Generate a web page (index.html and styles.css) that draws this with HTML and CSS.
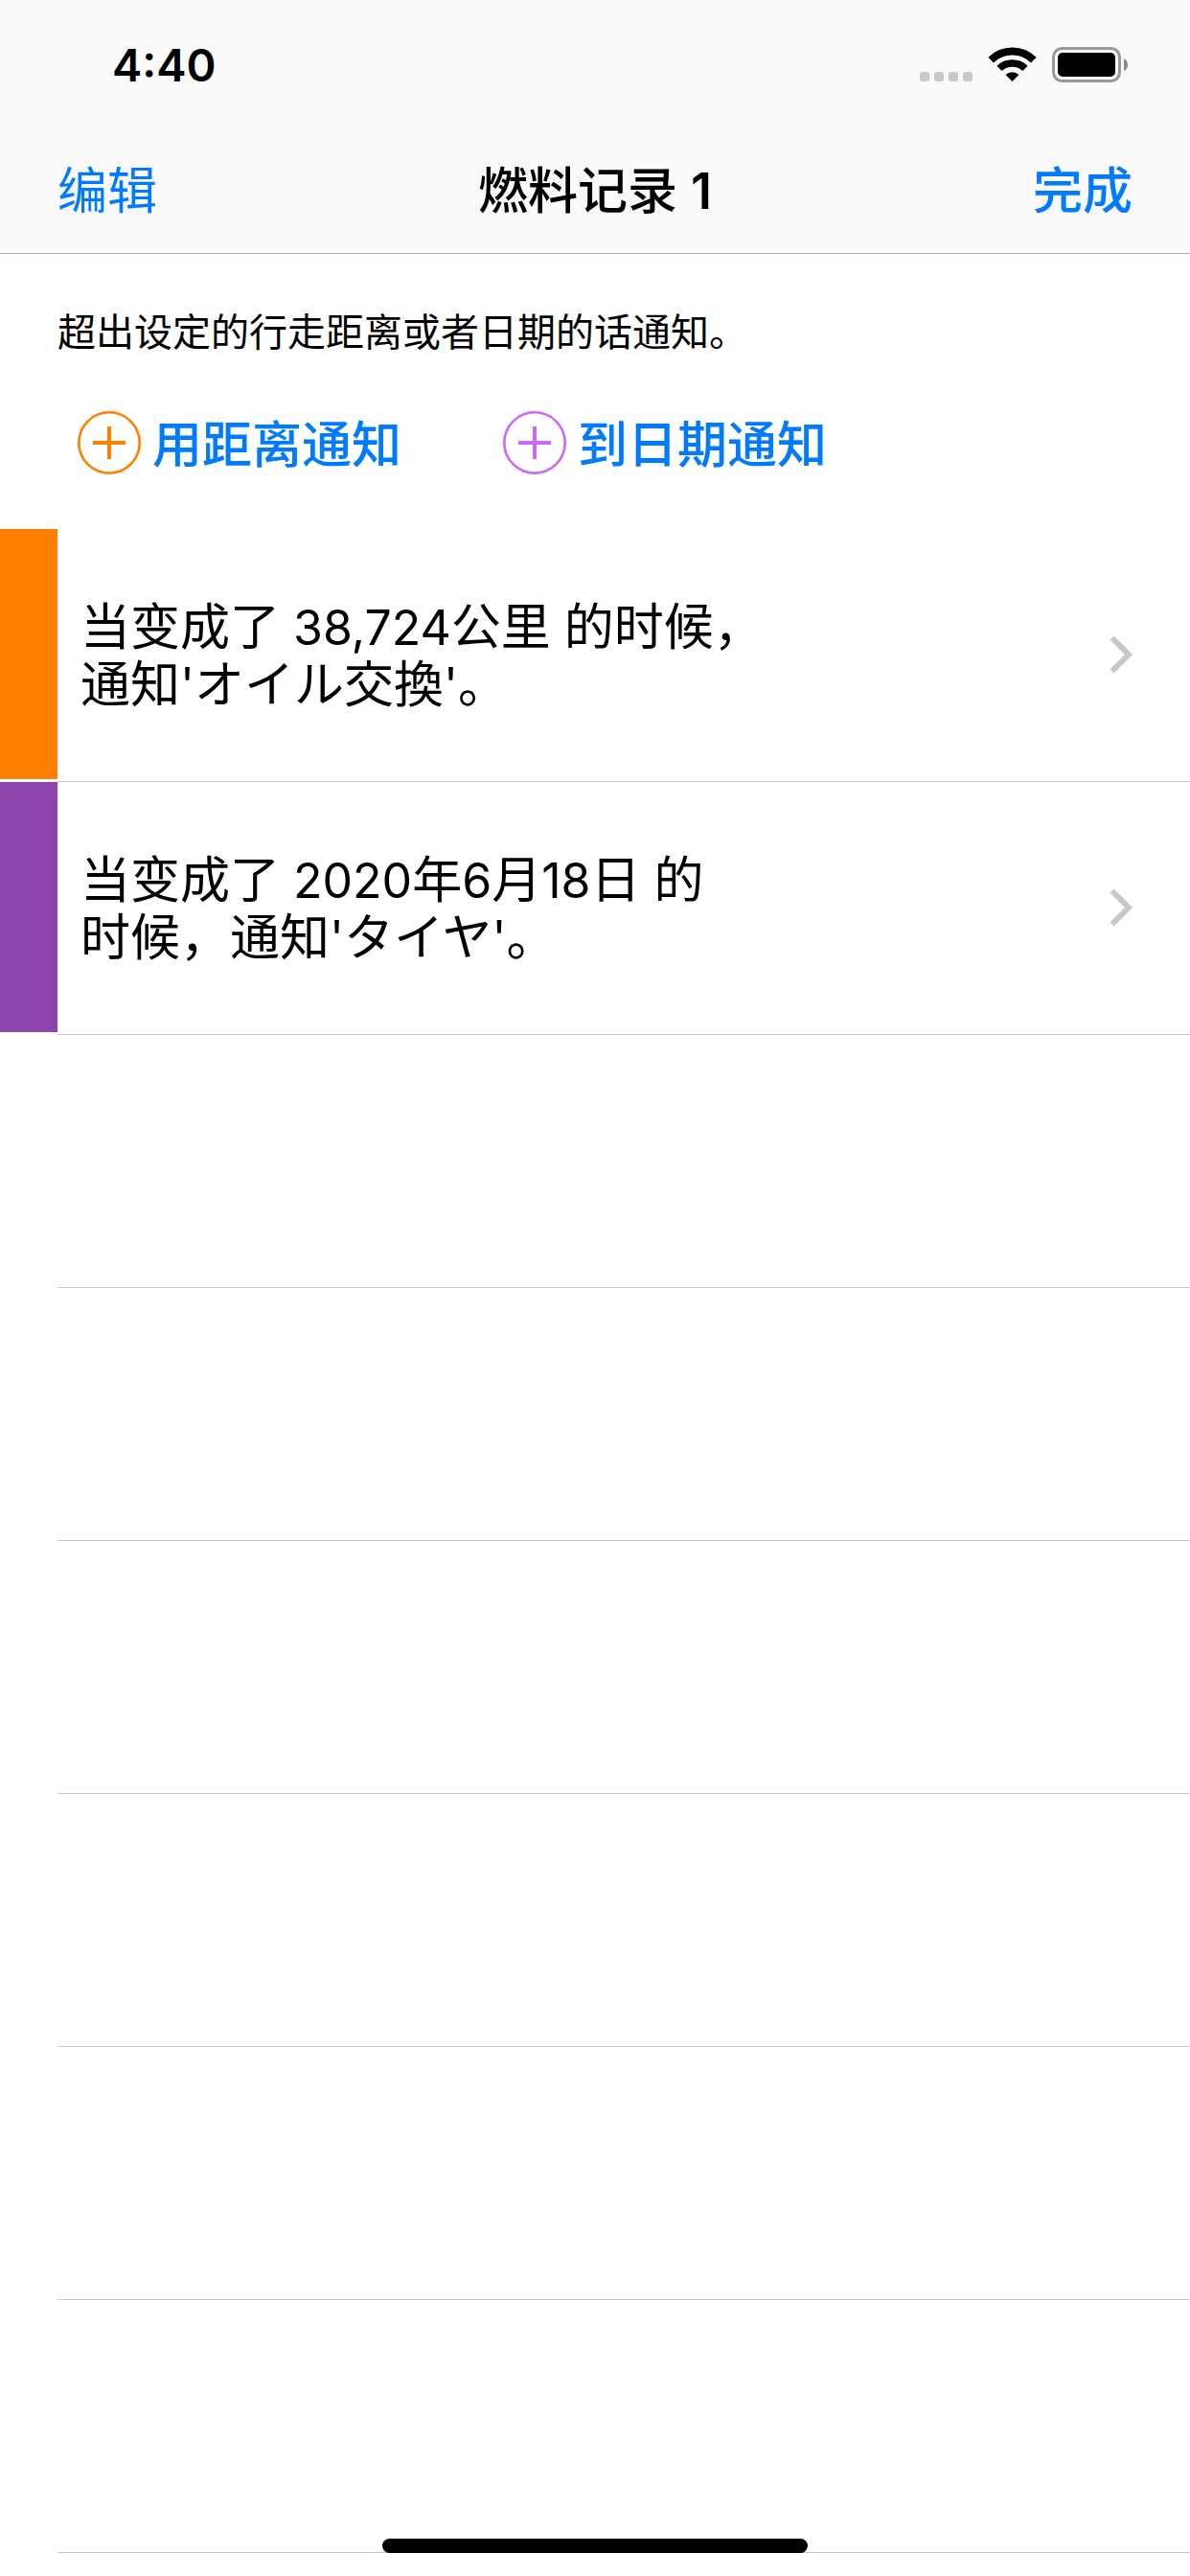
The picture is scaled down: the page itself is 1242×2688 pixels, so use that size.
FILE: index.html
```html
<!DOCTYPE html>
<html lang="zh-CN">
<head>
<meta charset="utf-8">
<meta name="viewport" content="width=device-width, initial-scale=1">
<title>燃料记录 1</title>
<link rel="stylesheet" href="styles.css">
</head>
<body>
<header class="header">
  <div class="status-bar">
    <time class="clock">4:40</time>
    <svg class="status-icons" viewBox="0 0 217 37" aria-hidden="true">
      <g fill="#c7c7c7">
        <rect x="0" y="26" width="10" height="10" rx="3"/>
        <rect x="15" y="26" width="10" height="10" rx="3"/>
        <rect x="30" y="26" width="10" height="10" rx="3"/>
        <rect x="45" y="26" width="10" height="10" rx="3"/>
      </g>
      <g fill="none" stroke="#000">
        <path d="M74.2 13.7A31.6 31.6 0 0 1 118.8 13.7" stroke-width="8"/>
        <path d="M83 22.4A19.6 19.6 0 0 1 110 22.4" stroke-width="7.5"/>
      </g>
      <path d="M96.5 36L89.5 29A10.4 10.4 0 0 1 103.5 29Z"/>
      <rect x="139.5" y="1.500" width="69" height="34" rx="9" fill="none" stroke="#999" stroke-width="3"/>
      <rect x="144" y="6" width="60" height="25" rx="5"/>
      <path d="M213 12Q217 14 217 18.500Q217 23 213 25Z" fill="#888"/>
    </svg>
  </div>
  <nav class="nav-bar">
    <button class="nav-button" type="button">编辑</button>
    <h1 class="title">燃料记录 <span class="title-number">1</span></h1>
    <button class="nav-button nav-button-done" type="button">完成</button>
  </nav>
</header>
<main>
  <section class="intro">
    <p class="hint">超出设定的行走距离或者日期的话通知。</p>
    <div class="actions">
      <button class="add-button add-distance" type="button">
        <svg class="plus" viewBox="0 0 66 66" aria-hidden="true"><circle cx="33" cy="33" r="31.700" stroke-width="2.600"/><path d="M16 33H50M33 16V50" stroke-width="4"/></svg>
        <span class="add-label">用距离通知</span>
      </button>
      <button class="add-button add-date" type="button">
        <svg class="plus" viewBox="0 0 66 66" aria-hidden="true"><circle cx="33" cy="33" r="31.700" stroke-width="2.600"/><path d="M16 33H50M33 16V50" stroke-width="4"/></svg>
        <span class="add-label">到日期通知</span>
      </button>
    </div>
  </section>
  <ul class="list">
    <li class="row row-distance">
      <a class="row-link" href="#distance">
        <span class="row-text">当变成了<span class="number"> 38,724</span>公里<span class="number"> </span>的时候，<br>通知<span class="number">'</span><span lang="ja">オイル交換</span><span class="number">'</span>。</span>
        <svg class="chevron" viewBox="0 0 24 40" aria-hidden="true"><path d="M2.500 2.500L20 20L2.500 37.500"/></svg>
      </a>
    </li>
    <li class="row row-date">
      <a class="row-link" href="#date">
        <span class="row-text">当变成了<span class="number"> 2020</span>年<span class="number">6</span>月<span class="number">18</span>日<span class="number"> </span>的<br>时候，通知<span class="number">'</span><span lang="ja">タイヤ</span><span class="number">'</span>。</span>
        <svg class="chevron" viewBox="0 0 24 40" aria-hidden="true"><path d="M2.500 2.500L20 20L2.500 37.500"/></svg>
      </a>
    </li>
    <li class="row"></li>
    <li class="row"></li>
    <li class="row"></li>
    <li class="row"></li>
    <li class="row"></li>
    <li class="row"></li>
  </ul>
</main>
<div class="home-indicator"></div>
</body>
</html>
```
FILE: styles.css
```css
* {
  box-sizing: border-box;
}

body {
  margin: 0;
  background: #fff;
  color: #000;
  font-family: Inter, "Noto Sans CJK SC", sans-serif;
  font-size: 52px;
  line-height: 60px;
}

button {
  padding: 0;
  border: 0;
  background: none;
  color: #007aff;
  font: inherit;
  cursor: pointer;
}

.header {
  background: #f9f9f9;
  border-bottom: 1px solid #b2b2b2;
}

.status-bar {
  display: flex;
  align-items: center;
  justify-content: space-between;
  height: 132px;
  padding: 3px 65px 0 117px;
}

.clock {
  font-size: 47px;
  font-weight: 600;
}

.status-icons {
  width: 217px;
  height: 37px;
}

.nav-bar {
  display: grid;
  grid-template-columns: 1fr auto 1fr;
  align-items: center;
  height: 132px;
  padding: 4px 60px 0;
}

.nav-button {
  justify-self: start;
}

.nav-button-done {
  justify-self: end;
  font-weight: 500;
}

.title {
  margin: 0;
  font-size: 52px;
  font-weight: 500;
}

.title-number {
  font-weight: 600;
}

.intro {
  padding: 52px 60px 57px;
}

.hint {
  margin: 0;
  font-size: 40px;
}

.actions {
  display: flex;
  gap: 106px;
  margin-top: 52px;
  padding-left: 21px;
}

.add-button {
  display: flex;
  align-items: center;
  gap: 12px;
  font-weight: 500;
}

.add-label {
  padding-top: 6px;
}

.plus {
  width: 66px;
  height: 66px;
  fill: none;
}

.add-distance .plus {
  stroke: #ff8000;
}

.add-date .plus {
  stroke: #cc66ff;
}

.list {
  margin: 0;
  padding: 0 0 24px;
  list-style: none;
}

.row {
  min-height: 264px;
  padding-left: 60px;
  background: linear-gradient(#c8c7cc, #c8c7cc) 60px 100% / 100% 1px no-repeat;
}

.row-link {
  display: flex;
  align-items: center;
  justify-content: space-between;
  min-height: 261px;
  margin-left: -60px;
  padding: 0 60px 0 24px;
  border-left: 60px solid;
  color: inherit;
  text-decoration: none;
}

.row-distance .row-link {
  border-left-color: #ff8000;
}

.row-date .row-link {
  border-left-color: #8e44ad;
}

.row-text {
  padding-top: 4px;
}

.number {
  font-size: 50px;
}

.chevron {
  width: 24px;
  height: 40px;
  fill: none;
  stroke: #c7c7cc;
  stroke-width: 6px;
}

.home-indicator {
  position: fixed;
  bottom: 24px;
  left: 50%;
  width: 444px;
  height: 15px;
  margin-left: -222px;
  border-radius: 8px;
  background: #000;
}
```
